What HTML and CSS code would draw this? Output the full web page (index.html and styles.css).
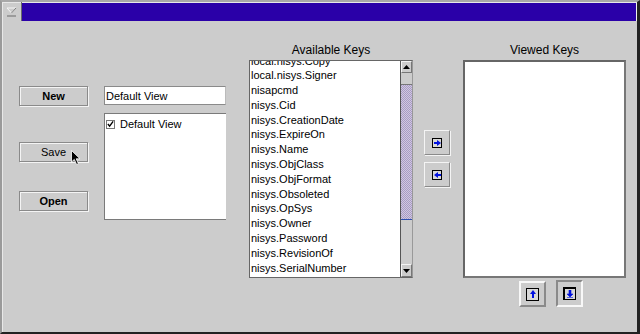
FILE: index.html
```html
<!DOCTYPE html>
<html lang="en">
<head>
    <meta charset="UTF-8">
    <title>View Editor</title>
    <link rel="stylesheet" href="styles.css">
</head>
<body>

<div class="window">
    <div class="titlebar">
        <div class="menu-btn">
            <svg width="11" height="11" viewBox="0 0 11 11">
                <path d="M1 2 H10 L5.5 7 Z" fill="none" stroke="#f4f4f4" stroke-width="1"/>
                <path d="M5.5 7 L10 2" stroke="#7a7a7a" stroke-width="1"/>
                <path d="M1 10 H10" stroke="#7a7a7a" stroke-width="1.2"/>
            </svg>
        </div>
        <div class="title"></div>
    </div>

    <div class="content">
        <div class="col col-actions">
            <button class="btn btn-new">New</button>
            <button class="btn btn-save">Save
                <svg class="pointer" width="11" height="16" viewBox="0 0 11 16">
                    <path d="M0.5 0.5 V12 L3.3 9.4 L5.6 14.5 L7.4 13.7 L5.2 8.8 H9 Z" fill="#000" stroke="#fff" stroke-width="0.8"/>
                </svg>
            </button>
            <button class="btn btn-open">Open</button>
        </div>

        <div class="col col-views">
            <input class="name-field" type="text" value="Default View">
            <div class="view-list">
                <div class="view-item">
                    <span class="check">
                        <svg width="8" height="8" viewBox="0 0 8 8"><path d="M1 4 L3 6.5 L7 1" fill="none" stroke="#000" stroke-width="1.6"/></svg>
                    </span>
                    Default View
                </div>
            </div>
        </div>

        <div class="col col-available">
            <div class="col-title">Available Keys</div>
            <div class="keylist">
                <ul class="keys">
                    <li><span>local.nisys.Copy</span></li>
                    <li>local.nisys.Signer</li>
                    <li>nisapcmd</li>
                    <li>nisys.Cid</li>
                    <li>nisys.CreationDate</li>
                    <li>nisys.ExpireOn</li>
                    <li>nisys.Name</li>
                    <li>nisys.ObjClass</li>
                    <li>nisys.ObjFormat</li>
                    <li>nisys.Obsoleted</li>
                    <li>nisys.OpSys</li>
                    <li>nisys.Owner</li>
                    <li>nisys.Password</li>
                    <li>nisys.RevisionOf</li>
                    <li>nisys.SerialNumber</li>
                </ul>
                <div class="scrollbar">
                    <div class="sb-btn">
                        <svg width="7" height="4" viewBox="0 0 7 4"><path d="M0 4 L3.5 0 L7 4 Z" fill="#000"/></svg>
                    </div>
                    <div class="sb-gap"></div>
                    <div class="sb-thumb"></div>
                    <div class="sb-trough"></div>
                    <div class="sb-btn sb-down">
                        <svg width="7" height="4" viewBox="0 0 7 4"><path d="M0 0 L3.5 4 L7 0 Z" fill="#000"/></svg>
                    </div>
                </div>
            </div>
        </div>

        <div class="col col-move">
            <button class="arrow-btn">
                <span class="arrow-box">
                    <svg width="7" height="6" viewBox="0 0 7 6"><path d="M0 2 H3 V0 L7 3 L3 6 V4 H0 Z" fill="#0010e0"/></svg>
                </span>
            </button>
            <button class="arrow-btn">
                <span class="arrow-box">
                    <svg width="7" height="6" viewBox="0 0 7 6"><path d="M7 2 H4 V0 L0 3 L4 6 V4 H7 Z" fill="#0010e0"/></svg>
                </span>
            </button>
        </div>

        <div class="col col-viewed">
            <div class="col-title">Viewed Keys</div>
            <div class="viewed-list"></div>
            <div class="order-btns">
                <button class="order-btn raised">
                    <span class="order-box">
                        <svg width="6" height="8" viewBox="0 0 6 8"><path d="M2 8 V4 H0 L3 0 L6 4 H4 V8 Z" fill="#0010e0"/></svg>
                    </span>
                </button>
                <button class="order-btn sunken">
                    <span class="order-box">
                        <svg width="6" height="8" viewBox="0 0 6 8"><path d="M2 0 V4 H0 L3 7 L6 4 H4 V0 Z M0 7.5 H6" fill="#0010e0" stroke="#0010e0" stroke-width="0.6"/></svg>
                    </span>
                </button>
            </div>
        </div>
    </div>
</div>

</body>
</html>
```

FILE: styles.css
```css
* {
    margin: 0;
    padding: 0;
    box-sizing: border-box;
}

body {
    font-family: "Liberation Sans", Arial, sans-serif;
    background-color: #cccccc;
    width: 640px;
    height: 334px;
    overflow: hidden;
    color: #000;
}

.window {
    width: 640px;
    height: 334px;
    background-color: #cccccc;
    border-top: 2px solid #a8a8a8;
    border-left: 2px solid #9a9a9a;
    border-right: 3px solid #222;
    border-bottom: 2px solid #222;
    box-shadow: inset 1px 1px 0 #e8e8e8;
}

/* title bar */
.titlebar {
    display: flex;
    height: 19px;
}

.menu-btn {
    width: 20px;
    display: flex;
    align-items: center;
    justify-content: center;
    border-right: 1px solid #6a6a6a;
}

.title {
    flex: 1;
    margin-top: 1px;
    background-color: #2a00a8;
    border-right: 1px solid #f0f0f0;
}

/* columns */
.content {
    display: flex;
    align-items: flex-start;
}

.col {
    display: flex;
    flex-direction: column;
}

.col-actions {
    margin-left: 17px;
    width: 69px;
    padding-top: 65px;
}

.btn {
    width: 69px;
    height: 20px;
    font-family: inherit;
    font-size: 11px;
    font-weight: bold;
    color: #000;
    background-color: #cccccc;
    border: 1px solid #8a8a8a;
    box-shadow: inset 1px 1px 0 #f4f4f4, 1px 1px 0 #f4f4f4;
    position: relative;
}

.btn-save {
    margin-top: 36px;
    font-weight: normal;
}

.btn-open {
    margin-top: 29px;
}

.pointer {
    position: absolute;
    left: 51px;
    top: 7px;
}

.col-views {
    margin-left: 16px;
    width: 122px;
    padding-top: 65px;
}

.name-field {
    width: 122px;
    height: 19px;
    font-family: inherit;
    font-size: 11px;
    color: #000;
    padding-left: 1px;
    background-color: #fff;
    border: 1px solid #8a8a8a;
    border-right-color: #bbb;
    outline: none;
}

.view-list {
    margin-top: 8px;
    height: 107px;
    background-color: #fff;
    border: 1px solid #7a7a7a;
    border-right: none;
    padding-top: 5px;
}

.view-item {
    display: flex;
    align-items: center;
    height: 10px;
    font-size: 11px;
    padding-left: 1px;
}

.check {
    width: 9px;
    height: 9px;
    border: 1px solid #777;
    display: flex;
    align-items: center;
    justify-content: center;
    margin-right: 5px;
}

/* available keys */
.col-available {
    margin-left: 23px;
    width: 164px;
    padding-top: 21px;
}

.col-title {
    font-size: 12px;
    line-height: 16px;
    text-align: center;
    margin-bottom: 2px;
}

.keylist {
    height: 218px;
    display: flex;
    background-color: #fff;
    border: 1px solid #666;
    border-right-color: #999;
}

.keys {
    flex: 1;
    list-style: none;
    overflow: hidden;
    font-size: 11px;
    line-height: 14.8px;
    padding-left: 1px;
}

/* first row is scrolled half out of view */
.keys li:first-child {
    height: 7.3px;
    overflow: hidden;
    display: flex;
    align-items: flex-end;
}

.keys li:first-child span {
    flex-shrink: 0;
}

.scrollbar {
    width: 12px;
    display: flex;
    flex-direction: column;
    background-color: #cccccc;
    border-left: 1px solid #555;
}

.sb-btn {
    height: 12px;
    display: flex;
    align-items: center;
    justify-content: center;
    border: 1px solid;
    border-color: #f4f4f4 #777 #777 #f4f4f4;
}

.sb-down {
    height: 13px;
}

.sb-gap {
    height: 12px;
    border-bottom: 1px solid #777;
}

.sb-thumb {
    height: 135px;
    background-color: #a89ac4;
    background-image: conic-gradient(#d0c8e0 25%, transparent 0 50%, #d0c8e0 0 75%, transparent 0);
    background-size: 2px 2px;
    border-bottom: 1px solid #3050b0;
}

.sb-trough {
    flex: 1;
}

/* move buttons */
.col-move {
    margin-left: 11px;
    width: 26px;
    padding-top: 109px;
    gap: 7px;
}

.arrow-btn {
    width: 26px;
    height: 25px;
    background-color: #cccccc;
    border: 1px solid;
    border-color: #f4f4f4 #8a8a8a #8a8a8a #f4f4f4;
    box-shadow: 1px 1px 0 #f4f4f4;
    display: flex;
    align-items: center;
    justify-content: center;
}

.arrow-box {
    width: 10px;
    height: 10px;
    border: 1px solid #000;
    background-color: #d8d8d8;
    display: flex;
    align-items: center;
    justify-content: center;
}

/* viewed keys */
.col-viewed {
    margin-left: 13px;
    width: 163px;
    padding-top: 21px;
}

.viewed-list {
    height: 218px;
    background-color: #fff;
    border: 2px solid #666;
    border-right-color: #777;
    border-bottom-color: #777;
}

.order-btns {
    display: flex;
    gap: 10px;
    padding-left: 56px;
    margin-top: 2px;
}

.order-btn {
    width: 27px;
    height: 27px;
    background-color: #cccccc;
    border: 2px solid;
    display: flex;
    align-items: center;
    justify-content: center;
}

.order-btn.raised {
    border-color: #f8f8f8 #8a8a8a #8a8a8a #f8f8f8;
    margin-top: 1px;
    height: 26px;
}

.order-btn.sunken {
    border-color: #8a8a8a #f8f8f8 #f8f8f8 #8a8a8a;
}

.order-box {
    width: 13px;
    height: 13px;
    border: 1px solid #000;
    background-color: #d8d8d8;
    display: flex;
    align-items: center;
    justify-content: center;
}

.sunken .order-box {
    border-width: 2px 1px 1px 2px;
}
```
